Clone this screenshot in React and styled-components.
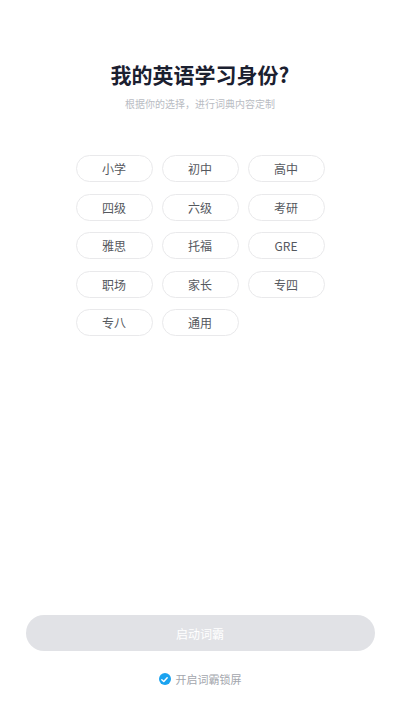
import React, { useState } from 'react';
import styled, { createGlobalStyle } from 'styled-components';

const GlobalStyles = createGlobalStyle`
  html, body {
    margin: 0;
    padding: 0;
    background: #ffffff;
  }
  body {
    font-family: "Noto Sans CJK SC", "Noto Sans", sans-serif;
  }
`;

const identities = [
  '小学', '初中', '高中',
  '四级', '六级', '考研',
  '雅思', '托福', 'GRE',
  '职场', '家长', '专四',
  '专八', '通用',
];

const App = () => {
  const [picked, setPicked] = useState(null);
  const [lock, setLock] = useState(true);

  return (
    <>
      <GlobalStyles />
      <Page>
        <Header>
          <Title>我的英语学习身份?</Title>
          <Subtitle>根据你的选择，进行词典内容定制</Subtitle>
        </Header>
        <Grid>
          {identities.map((name) => (
            <Pill key={name} $active={picked === name} onClick={() => setPicked(name)}>
              {name}
            </Pill>
          ))}
        </Grid>
        <Footer>
          <StartBtn disabled={!picked}>启动词霸</StartBtn>
          <LockRow onClick={() => setLock(!lock)}>
            <Check $on={lock}>
              <svg width="9" height="9" viewBox="0 0 10 10">
                <path d="M2 5.2 L4.2 7.3 L8 3" fill="none" stroke="#fff" strokeWidth="1.6" strokeLinecap="round" strokeLinejoin="round" />
              </svg>
            </Check>
            <LockText>开启词霸锁屏</LockText>
          </LockRow>
        </Footer>
      </Page>
    </>
  );
};

export default App;

const Page = styled.div`
  height: 710px;
  display: flex;
  flex-direction: column;
  align-items: center;
  box-sizing: border-box;
  padding-top: 60px;
`;

const Header = styled.div`
  display: flex;
  flex-direction: column;
  align-items: center;
`;

const Title = styled.h1`
  margin: 0;
  font-size: 21px;
  line-height: 28px;
  font-weight: 700;
  color: #1b2030;
`;

const Subtitle = styled.p`
  margin: 10px 0 0;
  font-size: 10px;
  line-height: 12px;
  color: #b9bcc3;
`;

const Grid = styled.div`
  margin-top: 45px;
  display: grid;
  grid-template-columns: repeat(3, 77px);
  column-gap: 9px;
  row-gap: 11.5px;
`;

const Pill = styled.button`
  height: 27px;
  box-sizing: border-box;
  border: 1px solid ${(p) => (p.$active ? '#1aa3f0' : '#e9e9eb')};
  border-radius: 14px;
  background: #fff;
  color: ${(p) => (p.$active ? '#1aa3f0' : '#55585e')};
  font-family: inherit;
  font-size: 12px;
  padding: 0;
  cursor: pointer;
`;

const Footer = styled.div`
  margin-top: auto;
  margin-bottom: 24px;
  width: 100%;
  display: flex;
  flex-direction: column;
  align-items: center;
`;

const StartBtn = styled.button`
  width: 349px;
  height: 36px;
  border: none;
  border-radius: 18px;
  background: #e1e2e6;
  color: #ffffff;
  font-family: inherit;
  font-size: 12px;
`;

const LockRow = styled.div`
  margin-top: 21px;
  display: flex;
  align-items: center;
  gap: 5px;
  cursor: pointer;
`;

const Check = styled.span`
  width: 12px;
  height: 12px;
  border-radius: 50%;
  background: ${(p) => (p.$on ? '#1aa3f0' : '#d5d7db')};
  display: flex;
  align-items: center;
  justify-content: center;
`;

const LockText = styled.span`
  font-size: 11px;
  line-height: 14px;
  color: #a3a6ad;
`;
